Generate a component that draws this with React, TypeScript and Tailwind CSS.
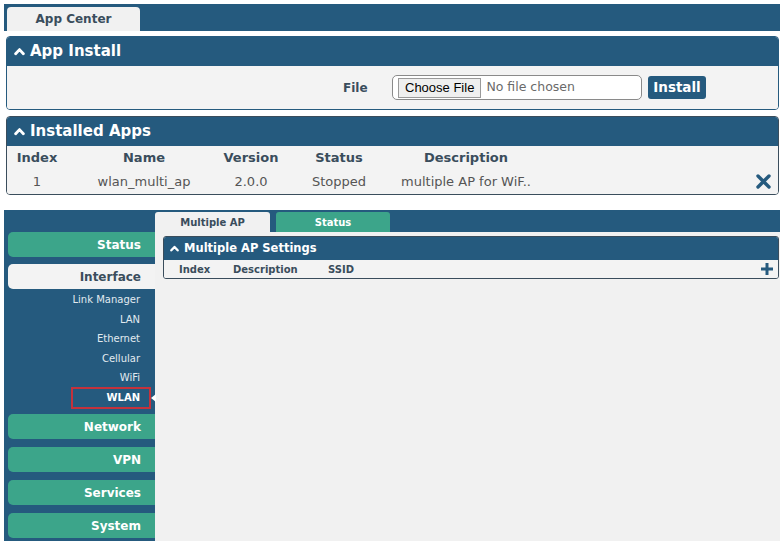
import type { ReactNode } from "react";

const sideButtons = ["Network", "VPN", "Services", "System"];
const subItems = ["Link Manager", "LAN", "Ethernet", "Cellular", "WiFi"];

function Caret({ size = 11 }: { size?: number }) {
  return (
    <svg width={size} height={size} viewBox="0 0 10 10" className="shrink-0">
      <path d="M1.5 7 L5 3.3 L8.5 7" fill="none" stroke="white" strokeWidth="2.6" strokeLinecap="round" strokeLinejoin="round" />
    </svg>
  );
}

function PanelHeader({ children, className, caret = 11 }: { children: ReactNode; className: string; caret?: number }) {
  return (
    <div className={`flex items-center gap-[5px] bg-[#255a7e] font-bold text-white ${className}`}>
      <Caret size={caret} />
      <span>{children}</span>
    </div>
  );
}

export default function App() {
  return (
    <div className="h-[549px] w-[782px] overflow-hidden bg-white pl-[4px] pr-[2px] pt-[4px] font-['DejaVu_Sans',sans-serif]">
      {/* app center */}
      <div className="flex h-[27px] items-end bg-[#255a7e] pl-[3px]">
        <div className="flex h-[24px] w-[133px] items-center justify-center rounded-t-[4px] bg-[#f1f1f1] text-[12px] font-bold text-[#3a4d5c]">
          App Center
        </div>
      </div>

      <div className="ml-[2px] mr-[1px] mt-[5px] overflow-hidden rounded-[4px] border border-[#255a7e]">
        <PanelHeader className="h-[29px] pl-[7px] text-[15px]">App Install</PanelHeader>
        <div className="flex h-[43px] items-center bg-[#f3f3f3] pl-[336px]">
          <span className="w-[49px] text-[12px] font-bold text-[#3a4d5c]">File</span>
          <div className="flex h-[25px] w-[250px] items-center rounded-[5px] border border-[#8a8a8a] bg-white pl-[5px]">
            <span className="flex h-[20px] items-center border border-[#9a9a9a] bg-[#efefef] px-[6px] font-['Liberation_Sans',sans-serif] text-[13px] text-black">
              Choose File
            </span>
            <span className="ml-[5px] text-[12.5px] text-[#6a6a6a]">No file chosen</span>
          </div>
          <div className="ml-[6px] flex h-[23px] w-[58px] items-center justify-center rounded-[3px] bg-[#255a7e] text-[13.5px] font-bold text-white">
            Install
          </div>
        </div>
      </div>

      <div className="ml-[2px] mr-[1px] mt-[6px] overflow-hidden rounded-[4px] border border-[#3a4d5c]">
        <PanelHeader className="h-[29px] pl-[7px] text-[15px]">Installed Apps</PanelHeader>
        <div className="bg-[#f3f3f3] text-[13px]">
          <div className="grid h-[23px] grid-cols-[60px_154px_60px_116px_138px_1fr] items-center text-center font-bold text-[#3a4d5c]">
            <span>Index</span>
            <span>Name</span>
            <span>Version</span>
            <span>Status</span>
            <span>Description</span>
            <span />
          </div>
          <div className="grid h-[25px] grid-cols-[60px_154px_60px_116px_138px_1fr] items-center text-center text-[#555]">
            <span>1</span>
            <span>wlan_multi_ap</span>
            <span>2.0.0</span>
            <span>Stopped</span>
            <span>multiple AP for WiF..</span>
            <span className="flex justify-end pr-[7px]">
              <svg width="15" height="15" viewBox="0 0 15 15">
                <path d="M2 2 L13 13 M13 2 L2 13" stroke="#255a7e" strokeWidth="3.4" strokeLinecap="round" />
              </svg>
            </span>
          </div>
        </div>
      </div>

      {/* router wlan page */}
      <div className="mt-[15px] flex h-[331px] bg-[#255a7e]">
        <div className="flex w-[151px] flex-col pl-[4px] pt-[22px]">
          <div className="flex h-[25px] items-center justify-end rounded-l-[5px] bg-[#3ca58a] pr-[14px] text-[12px] font-bold text-white">
            Status
          </div>
          <div className="mt-[7px] flex h-[25px] items-center justify-end rounded-l-[5px] bg-[#f3f3f3] pr-[14px] text-[12px] font-bold text-[#3a4d5c]">
            Interface
          </div>
          <div className="flex flex-col pt-[1px]">
            {subItems.map((s) => (
              <div key={s} className="flex h-[19.5px] items-center justify-end pr-[15px] text-[10px] text-[#e2eaf0]">
                {s}
              </div>
            ))}
            <div className="relative flex h-[19.5px] items-center justify-end pr-[15px] text-[10px] font-bold text-white">
              WLAN
              <div className="absolute right-[4px] top-[-1px] h-[22px] w-[80px] border-2 border-[#c4323c]" />
              <div className="absolute right-[-1px] top-[6px] h-0 w-0 border-y-[4px] border-r-[5px] border-y-transparent border-r-white" />
            </div>
          </div>
          {sideButtons.map((b, i) => (
            <div
              key={b}
              className={`${i === 0 ? "mt-[7px]" : "mt-[8px]"} flex h-[25px] items-center justify-end rounded-l-[5px] bg-[#3ca58a] pr-[14px] text-[12px] font-bold text-white`}
            >
              {b}
            </div>
          ))}
        </div>

        <div className="flex flex-1 flex-col">
          <div className="flex h-[22px] items-end gap-[6px]">
            <div className="flex h-[20px] w-[115px] items-center justify-center rounded-t-[3px] bg-[#f1f1f1] text-[10px] font-bold text-[#3a4d5c]">
              Multiple AP
            </div>
            <div className="flex h-[20px] w-[114px] items-center justify-center rounded-t-[3px] bg-[#3ca58a] text-[10px] font-bold text-white">
              Status
            </div>
          </div>
          <div className="flex-1 bg-[#f1f1f1] pl-[8px] pr-[1px] pt-[4px]">
            <div className="overflow-hidden rounded-[3px] border border-[#3a4d5c]">
              <PanelHeader className="h-[23px] pl-[6px] text-[11.5px]" caret={9}>
                Multiple AP Settings
              </PanelHeader>
              <div className="flex h-[18px] items-center bg-[#f3f3f3] pl-[15px] text-[10px] font-bold text-[#3a4d5c]">
                <span className="w-[54px]">Index</span>
                <span className="w-[95px]">Description</span>
                <span>SSID</span>
                <span className="ml-auto pr-[4px]">
                  <svg width="14" height="14" viewBox="0 0 14 14">
                    <path d="M7 1 V13 M1 7 H13" stroke="#255a7e" strokeWidth="3" />
                  </svg>
                </span>
              </div>
            </div>
          </div>
        </div>
      </div>
    </div>
  );
}
